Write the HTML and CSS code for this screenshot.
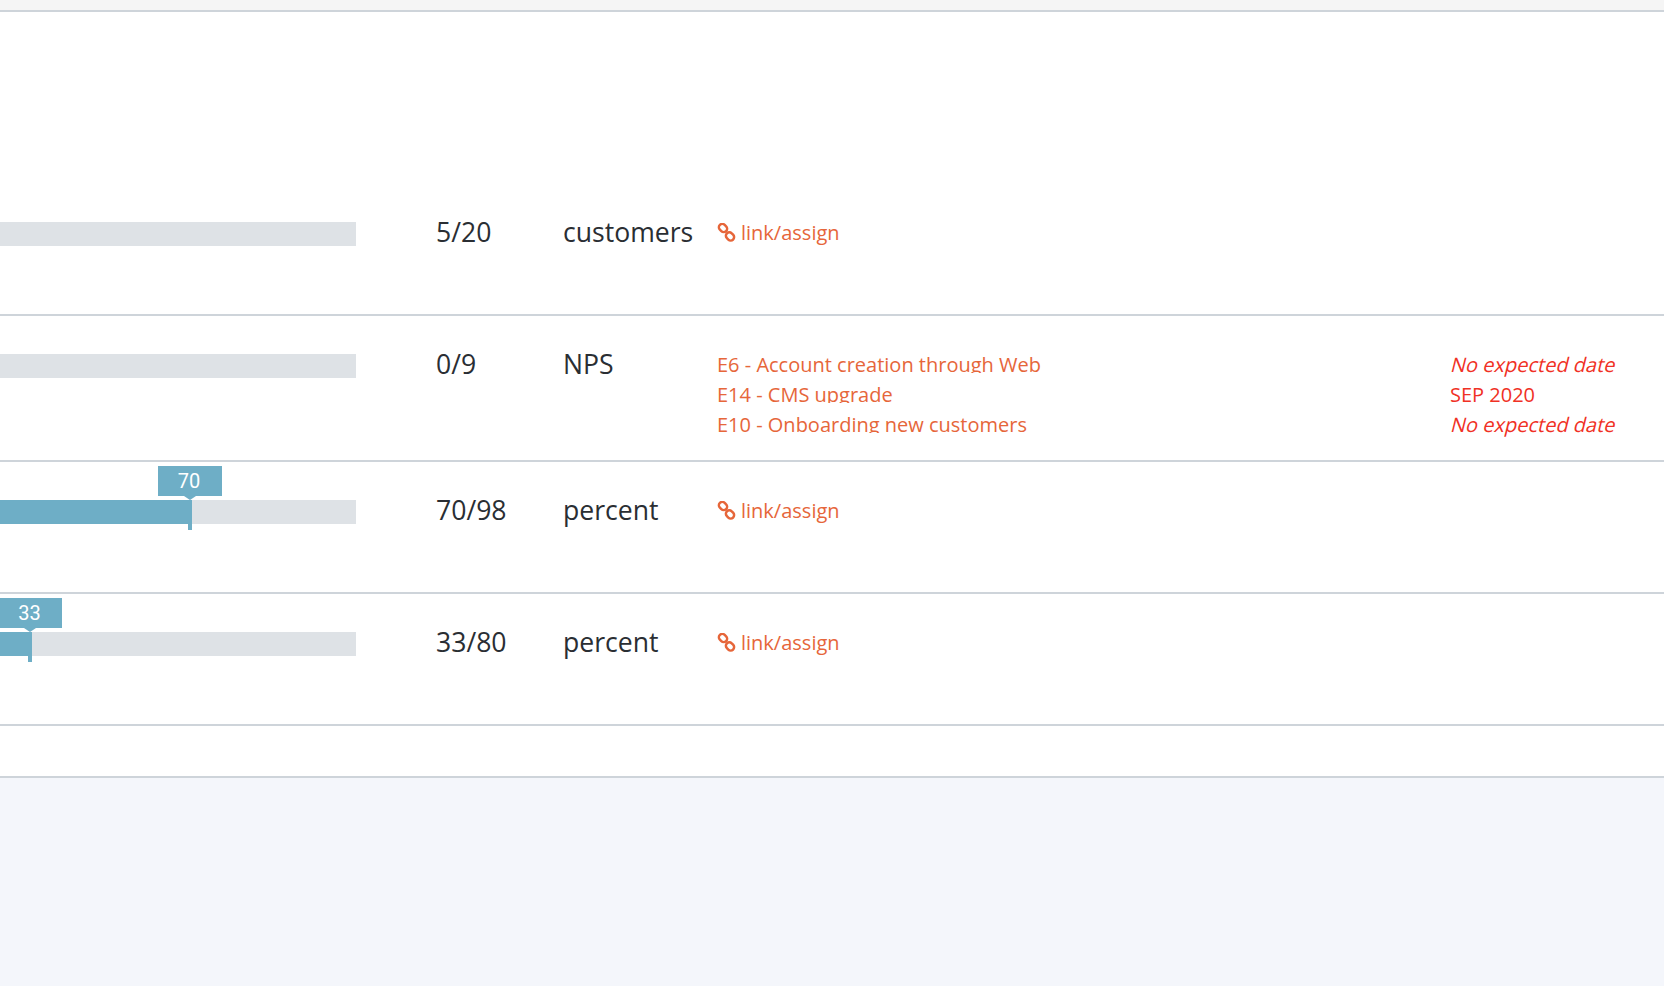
FILE: index.html
```html
<!DOCTYPE html>
<html lang="en">
<head>
<meta charset="utf-8">
<title>Key results</title>
<link rel="stylesheet" href="styles.css">
</head>
<body>
<div class="topbar"></div>
<main class="table">
  <section class="row row-first">
    <div class="track"></div>
    <div class="value">5/20</div>
    <div class="unit">customers</div>
    <a class="link"><svg class="chain" viewBox="0 0 19 19"><g fill="none" stroke="currentColor" stroke-width="2.5"><rect x="1.6" y="1.6" width="8.8" height="6.8" rx="3.4" transform="rotate(45 6 5)"/><rect x="8.6" y="10" width="8.8" height="6.8" rx="3.4" transform="rotate(45 13 13.4)"/></g></svg>link/assign</a>
    <div></div>
  </section>
  <section class="row row-multi">
    <div class="track"></div>
    <div class="value">0/9</div>
    <div class="unit">NPS</div>
    <div class="epics">
      <div class="clip"><a class="epic">E6 - Account creation through Web</a></div>
      <div class="clip"><a class="epic">E14 - CMS upgrade</a></div>
      <div class="clip"><a class="epic">E10 - Onboarding new customers</a></div>
    </div>
    <div class="dates">
      <div class="date"><span class="none">No expected date</span></div>
      <div class="date">SEP 2020</div>
      <div class="date"><span class="none">No expected date</span></div>
    </div>
  </section>
  <section class="row">
    <div class="track"><div class="fill" style="width:190px"></div>
      <div class="tip tip-70">70</div><div class="arrow" style="left:190px"></div><div class="tick" style="left:188px"></div></div>
    <div class="value">70/98</div>
    <div class="unit">percent</div>
    <a class="link"><svg class="chain" viewBox="0 0 19 19"><g fill="none" stroke="currentColor" stroke-width="2.5"><rect x="1.6" y="1.6" width="8.8" height="6.8" rx="3.4" transform="rotate(45 6 5)"/><rect x="8.6" y="10" width="8.8" height="6.8" rx="3.4" transform="rotate(45 13 13.4)"/></g></svg>link/assign</a>
    <div></div>
  </section>
  <section class="row">
    <div class="track"><div class="fill" style="width:30px"></div>
      <div class="tip tip-33">33</div><div class="arrow" style="left:30px"></div><div class="tick" style="left:28px"></div></div>
    <div class="value">33/80</div>
    <div class="unit">percent</div>
    <a class="link"><svg class="chain" viewBox="0 0 19 19"><g fill="none" stroke="currentColor" stroke-width="2.5"><rect x="1.6" y="1.6" width="8.8" height="6.8" rx="3.4" transform="rotate(45 6 5)"/><rect x="8.6" y="10" width="8.8" height="6.8" rx="3.4" transform="rotate(45 13 13.4)"/></g></svg>link/assign</a>
    <div></div>
  </section>
  <div class="row-empty"></div>
</main>
</body>
</html>
```
FILE: styles.css
```css
* { box-sizing: border-box; }
html, body { margin: 0; padding: 0; }
body {
  height: 986px;
  overflow: hidden;
  background: #f4f6fb;
  font-family: "Open Sans", sans-serif;
  color: #2a2e33;
}
.topbar {
  height: 12px;
  background: #f5f5f5;
  border-bottom: 2px solid #ced4da;
}
.table { background: #fff; }
.row {
  display: grid;
  grid-template-columns: 436px 127px 154px 733px 1fr;
  height: 132px;
  padding-top: 38px;
  border-bottom: 2px solid #ced4da;
  align-items: start;
}
.row-first { height: 304px; padding-top: 210px; }
.row-multi { height: 146px; }
.row-empty { height: 52px; border-bottom: 2px solid #ced4da; }
.track {
  position: relative;
  width: 356px;
  height: 24px;
  background: #dee2e6;
}
.fill { height: 24px; background: #6eaec6; }
.tip {
  position: absolute;
  top: -34px;
  height: 30px;
  background: #6eaec6;
  color: #fff;
  font-family: Roboto, sans-serif;
  font-size: 20px;
  line-height: 30px;
  text-align: center;
}
.tip-70 { left: 158px; width: 64px; padding-right: 2px; }
.tip-33 { left: 0; width: 62px; padding-right: 3px; }
.arrow {
  position: absolute;
  top: -4px;
  width: 12px;
  height: 4px;
  margin-left: -6px;
  background: #6eaec6;
  clip-path: polygon(0 0, 100% 0, 50% 100%);
}
.tick {
  position: absolute;
  top: 0;
  width: 4px;
  height: 30px;
  background: #6eaec6;
}
.value, .unit {
  font-size: 26.6px;
  line-height: 24px;
  margin-top: -2px;
}
.link {
  display: flex;
  align-items: center;
  gap: 5px;
  margin-top: -1px;
  color: #e6663a;
  font-size: 20px;
  line-height: 24px;
}
.chain { width: 19px; height: 19px; flex: none; margin-top: -2px; }
.epics { margin-top: -11px; }
.dates { margin-top: -4px; }
.clip { height: 30px; overflow: hidden; }
.epic {
  display: block;
  color: #e6663a;
  font-size: 20px;
  line-height: 30px;
  margin-top: 7px;
}
.date {
  height: 30px;
  color: #f03125;
  font-size: 20px;
  line-height: 30px;
}
.none {
  display: inline-block;
  transform: skewX(-14deg);
  transform-origin: 0 70%;
}
```
